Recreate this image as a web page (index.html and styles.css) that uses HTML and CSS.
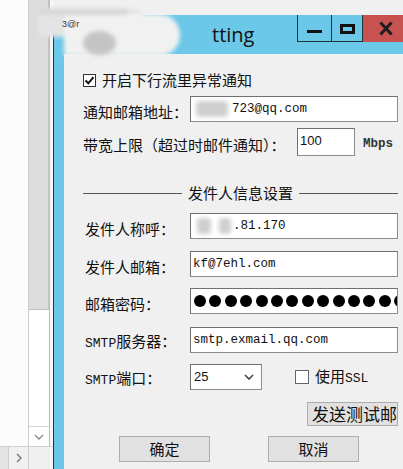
FILE: index.html
```html
<!DOCTYPE html>
<html lang="zh-CN">
  <head>
    <meta charset="UTF-8" />
    <title>Setting</title>
    <link rel="stylesheet" href="styles.css">
  </head>

  <body>
    <div class="screen">
      <!-- window behind the dialog -->
      <div class="bgwin">
        <div class="bg-main">
          <div class="bg-page"></div>
          <div class="vscroll">
            <div class="thumb"></div>
            <div class="track"></div>
            <div class="arrow-btn">
              <svg width="10" height="6" viewBox="0 0 10 6"><path d="M1 1 L5 5 L9 1" fill="none" stroke="#8a8a8a" stroke-width="1.4"/></svg>
            </div>
          </div>
          <div class="bg-gap"></div>
        </div>
        <div class="hscroll">
          <div class="h-cell"></div>
          <div class="h-btn">
            <svg width="6" height="10" viewBox="0 0 6 10"><path d="M1 1 L5 5 L1 9" fill="none" stroke="#777" stroke-width="1.4"/></svg>
          </div>
          <div class="h-corner"></div>
        </div>
      </div>

      <!-- the dialog -->
      <div class="dialog">
        <div class="titlebar">
          <span class="title">tting</span>
          <div class="caption-btns">
            <div class="cap cap-min"><i></i></div>
            <div class="cap cap-max"><i></i></div>
            <div class="cap cap-close">
              <svg width="14" height="15" viewBox="0 0 14 15"><path d="M1.5 1.5 L12.5 13.5 M12.5 1.5 L1.5 13.5" stroke="#1d1d1d" stroke-width="3"/></svg>
            </div>
          </div>
        </div>

        <div class="client">
          <div class="chk-row">
            <span class="chk checked">
              <svg width="11" height="11" viewBox="0 0 11 11"><path d="M1.5 5.5 L4.3 8.3 L9.5 2.2" fill="none" stroke="#111" stroke-width="2"/></svg>
            </span>
            <span>开启下行流里异常通知</span>
          </div>

          <div class="field row-mail">
            <span class="label">通知邮箱地址：</span>
            <div class="input mono">
              <span class="hide hide-mail"></span>723@qq.com
            </div>
          </div>

          <div class="field row-bw">
            <span class="label label-bw">带宽上限（超过时邮件通知）：</span>
            <div class="input input-bw">100</div>
            <span class="unit mono">Mbps</span>
          </div>

          <div class="group">
            <span class="line line-left"></span>
            <span class="group-title">发件人信息设置</span>
            <span class="line"></span>
          </div>

          <div class="field sub row-name">
            <span class="label">发件人称呼：</span>
            <div class="input mono">
              <span class="hide hide-a"></span><span class="hide hide-b"></span>.81.170
            </div>
          </div>

          <div class="field sub row-from">
            <span class="label">发件人邮箱：</span>
            <div class="input mono">kf@7ehl.com</div>
          </div>

          <div class="field sub row-pass">
            <span class="label">邮箱密码：</span>
            <div class="input dots">
              <i></i><i></i><i></i><i></i><i></i><i></i><i></i><i></i><i></i><i></i><i></i><i></i><i></i><i></i>
            </div>
          </div>

          <div class="field sub row-smtp">
            <span class="label"><span class="latin">SMTP</span>服务器：</span>
            <div class="input mono">smtp.exmail.qq.com</div>
          </div>

          <div class="field sub row-port">
            <span class="label"><span class="latin">SMTP</span>端口：</span>
            <div class="input select">
              <span>25</span>
              <svg width="10" height="6" viewBox="0 0 10 6"><path d="M1 1 L5 5 L9 1" fill="none" stroke="#444" stroke-width="1.6"/></svg>
            </div>
            <span class="chk ssl-chk"></span>
            <span>使用<span class="latin">SSL</span></span>
          </div>

          <div class="test-row">
            <div class="btn btn-test">发送测试邮件</div>
          </div>

          <div class="btn-row">
            <div class="btn">确定</div>
            <div class="btn">取消</div>
          </div>
        </div>
      </div>

      <!-- blurred-out corner of the screenshot -->
      <div class="smudge smudge-top"></div>
      <div class="smudge smudge-main"></div>
      <div class="smudge smudge-gear"></div>
      <div class="smudge smudge-bar"></div>
      <span class="smudge-text">3@r</span>
    </div>
  </body>
</html>
```

FILE: styles.css
```css
body {
  margin: 0;
  font-family: "Noto Sans CJK SC", sans-serif;
  font-size: 15px;
  color: #111;
}

.screen {
  position: relative;
  display: flex;
  width: 403px;
  height: 469px;
  overflow: hidden;
  background: #f0f0f0;
}

/* background window */
.bgwin {
  width: 53px;
  flex: none;
  display: flex;
  flex-direction: column;
}

.bg-main {
  flex: 1;
  display: flex;
}

.bg-page {
  width: 28px;
  background: #fcfcfc;
}

.vscroll {
  width: 20px;
  border-left: 1px solid #cdcdcd;
  border-right: 1px solid #bdbdbd;
  display: flex;
  flex-direction: column;
  background: #fff;
}

.thumb {
  height: 310px;
  background: #dcdcdc;
  border-right: 1px solid #c2c2c2;
  border-bottom: 1px solid #c2c2c2;
  box-sizing: border-box;
}

.track {
  flex: 1;
}

.arrow-btn {
  height: 19px;
  border-top: 1px solid #d6d6d6;
  display: flex;
  align-items: center;
  justify-content: center;
}

.bg-gap {
  width: 3px;
  background: #f6f6f6;
}

.hscroll {
  height: 22px;
  display: flex;
  border-top: 1px solid #cfcfcf;
  background: #f0f0f0;
}

.h-cell {
  width: 8px;
  border-right: 1px solid #cfcfcf;
  background: #e4e4e4;
}

.h-btn {
  width: 19px;
  display: flex;
  align-items: center;
  justify-content: center;
  border-right: 1px solid #cfcfcf;
}

.h-corner {
  flex: 1;
  border-right: 3px solid #f6f6f6;
}

/* dialog */
.dialog {
  flex: 1;
  min-width: 0;
  margin-top: 15px;
  display: flex;
  flex-direction: column;
  background: #6bc8e8;
  border-left: 1px solid #1e3542;
}

.titlebar {
  height: 39px;
  display: flex;
  align-items: flex-start;
}

.title {
  padding-left: 158px;
  margin-top: 8px;
  font-family: "Open Sans", sans-serif;
  font-size: 20px;
  color: #111;
  line-height: 24px;
}

.caption-btns {
  margin-left: auto;
  display: flex;
}

.cap {
  height: 27px;
  box-sizing: border-box;
  display: flex;
  align-items: center;
  justify-content: center;
}

.cap-min {
  width: 35px;
  border: 1px solid #20323c;
  border-top: 0;
}

.cap-min i {
  width: 15px;
  height: 3px;
  margin-top: 7px;
  background: #111;
}

.cap-max {
  width: 31px;
  border-bottom: 1px solid #20323c;
  border-right: 1px solid #20323c;
}

.cap-max i {
  width: 15px;
  height: 10px;
  box-sizing: border-box;
  border: 3px solid #111;
  margin-top: 2px;
}

.cap-close {
  width: 40px;
  background: #c85250;
}

.cap-close svg {
  margin-left: 6px;
}

.client {
  flex: 1;
  min-width: 0;
  margin-left: 10px;
  background: #f0f0f0;
  padding: 19px 5px 0 19px;
  display: flex;
  flex-direction: column;
  line-height: 20px;
}

.chk-row {
  display: flex;
  align-items: center;
  gap: 6px;
  height: 14px;
}

.chk {
  width: 13px;
  height: 13px;
  box-sizing: border-box;
  border: 1px solid #333;
  background: #fff;
  display: flex;
  align-items: center;
  justify-content: center;
}

.field {
  display: flex;
  align-items: center;
}

.label {
  flex: none;
  width: 107px;
  padding-top: 5px;
  white-space: nowrap;
}

.sub .label {
  width: 105px;
  padding-left: 2px;
}

.latin {
  font-family: "Liberation Mono", monospace;
  font-size: 13px;
}

.input {
  flex: 1;
  min-width: 0;
  height: 26px;
  box-sizing: border-box;
  border: 1px solid #8c8c8c;
  border-top-color: #707070;
  border-left-color: #707070;
  background: #fff;
  display: flex;
  align-items: center;
  padding-left: 2px;
  overflow: hidden;
  white-space: nowrap;
}

.mono {
  font-family: "Liberation Mono", monospace;
  font-size: 12.5px;
  color: #111;
}

.row-mail {
  margin-top: 9px;
}

.row-bw {
  margin-top: 6px;
}

.label-bw {
  width: 214px;
}

.input-bw {
  flex: none;
  width: 58px;
  height: 28px;
  font-family: "Liberation Sans", sans-serif;
  font-size: 13px;
  align-items: flex-start;
  padding-top: 2px;
}

.unit {
  margin-left: 8px;
  padding-top: 4px;
  font-weight: bold;
  color: #333;
}

.hide {
  display: inline-block;
  height: 16px;
  background: #cfcfcf;
  border-radius: 4px;
  filter: blur(2px);
}

.hide-mail {
  width: 32px;
  margin: 0 4px 0 3px;
}

.hide-a {
  width: 14px;
  margin: 0 8px 0 4px;
}

.hide-b {
  width: 12px;
  margin-right: 2px;
}

.group {
  margin-top: 27px;
  display: flex;
  align-items: center;
  height: 20px;
}

.line {
  flex: 1;
  height: 1px;
  background: #555;
}

.line-left {
  flex: none;
  width: 99px;
}

.group-title {
  padding: 0 6px;
}

.row-name {
  margin-top: 10px;
}

.row-from {
  margin-top: 12px;
}

.row-pass {
  margin-top: 11px;
}

.row-smtp {
  margin-top: 12px;
}

.row-port {
  margin-top: 9px;
}

.dots {
  gap: 3.4px;
  padding-left: 3px;
}

.dots i {
  flex: none;
  width: 12px;
  height: 12px;
  border-radius: 50%;
  background: #000;
}

.select {
  flex: none;
  width: 72px;
  justify-content: space-between;
  padding: 0 7px 0 3px;
  font-family: "Liberation Sans", sans-serif;
  font-size: 13px;
}

.ssl-chk {
  width: 14px;
  height: 14px;
  margin: 0 6px 0 33px;
  border-color: #666;
}

.test-row {
  margin-top: 11px;
  display: flex;
  justify-content: flex-end;
}

.btn {
  width: 91px;
  height: 26px;
  box-sizing: border-box;
  border: 1px solid #adadad;
  background: #e1e1e1;
  display: flex;
  align-items: center;
  justify-content: center;
}

.btn-test {
  width: 91px;
  height: 24px;
  justify-content: flex-start;
  padding-left: 4px;
  font-size: 17px;
  overflow: hidden;
  white-space: nowrap;
}

.btn-row {
  margin-top: 10px;
  display: flex;
  gap: 58px;
  padding-left: 36px;
}

/* blurred patch over the top-left corner */
.smudge {
  position: absolute;
  filter: blur(2px);
}

.smudge-top {
  left: 38px;
  top: 9px;
  width: 104px;
  height: 28px;
  background: #e4e4e4;
  border-radius: 6px;
}

.smudge-main {
  left: 64px;
  top: 14px;
  width: 116px;
  height: 42px;
  background: #f1f1f1;
  border-radius: 6px 30px 30px 4px;
}

.smudge-gear {
  left: 83px;
  top: 31px;
  width: 33px;
  height: 24px;
  background: #c4c4c4;
  border-radius: 50%;
}

.smudge-bar {
  left: 40px;
  top: 10px;
  width: 88px;
  height: 4px;
  background: #d2d2d2;
}

.smudge-text {
  position: absolute;
  left: 62px;
  top: 19px;
  font-family: "Liberation Sans", sans-serif;
  font-size: 9px;
  color: #333;
}
```
